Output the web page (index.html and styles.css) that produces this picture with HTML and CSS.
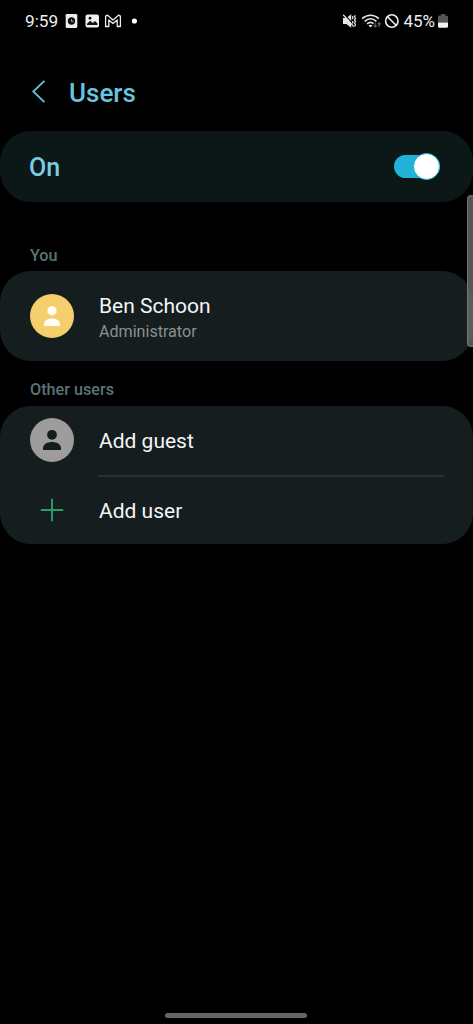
FILE: index.html
```html
<!DOCTYPE html>
<html lang="en">
<head>
<meta charset="utf-8">
<title>Users</title>
<link rel="stylesheet" href="styles.css">
</head>
<body>
<div class="screen">
  <div class="status">
    <div class="status-left">
      <span class="time">9:59</span>
      <svg class="notifications" width="74" height="16" viewBox="0 0 74 16">
        <rect x="0.7" y="1" width="11.6" height="14" rx="1.3" fill="#eee"/>
        <circle cx="6.5" cy="8" r="3.7" fill="#111"/>
        <path d="M6.5 6.2V8.3H8.5" fill="none" stroke="#aaa" stroke-width="1"/>
        <rect x="20.5" y="1.5" width="13.5" height="13" rx="2" fill="#eee"/>
        <path d="M22 12V10.8L25.2 7.8L27.8 10L30 8L32.5 10.4V12Z" fill="#111"/>
        <circle cx="25" cy="5.2" r="1.4" fill="#111"/>
        <path d="M40.6 13.5V3.2L42.5 2.2L48 7.1L53.5 2.2L55.4 3.2V13.5H52.2V7L48 10.6L43.8 7V13.5Z" fill="none" stroke="#eee" stroke-width="1.3" stroke-linejoin="round"/>
        <circle cx="69.4" cy="8" r="2.6" fill="#fff"/>
      </svg>
    </div>
    <div class="status-right">
      <svg class="signals" width="57" height="16" viewBox="0 0 57 16">
        <path d="M1 5H4.4L9.2 1.2V14.8L4.4 11H1Z" fill="#e6e6e6"/>
        <path d="M2.2 1.2L12.6 12.6" stroke="#000" stroke-width="1.2"/>
        <path d="M1.2 1.8L11.8 13.6" stroke="#e6e6e6" stroke-width="1.3"/>
        <path d="M10.7 3V6.2M10.7 8V10.4M13.2 2.2L12.6 3.8L13.4 5.4L12.6 7L13.4 8.6L12.6 10.2L13.4 11.8L12.8 13.6" fill="none" stroke="#ddd" stroke-width="1.3"/>
        <path d="M20.1 5.6C25.2 1.1 31.8 1.1 36.9 5.6M22.7 8.3C26.4 5.1 30.7 5.1 34.4 8.3M25.1 10.9C27.3 9.1 29.8 9.1 31.5 10.7" fill="none" stroke="#e6e6e6" stroke-width="1.6"/>
        <path d="M26.5 12.4Q28.5 11 30.5 12.4L28.5 14.6Z" fill="#e6e6e6"/>
        <path d="M33.2 9.8V14M31.6 12.4L33.2 14L34.8 12.4M37.2 14.2V9.8M35.6 11.4L37.2 9.8L38.8 11.4" fill="none" stroke="#666" stroke-width="1.1"/>
        <circle cx="49.8" cy="8" r="6.2" fill="none" stroke="#eee" stroke-width="1.6"/>
        <path d="M45.5 3.7L54.1 12.3" stroke="#eee" stroke-width="1.6"/>
      </svg>
      <span class="percent">45%</span>
      <svg class="battery" width="10" height="14" viewBox="0 0 10 14">
        <path d="M3 0H7V1.5H8.5Q10 1.5 10 3V8.6H0V3Q0 1.5 1.5 1.5H3Z" fill="#555"/>
        <path d="M0 8.6H10V12.2Q10 13.7 8.5 13.7H1.5Q0 13.7 0 12.2Z" fill="#f2f2f2"/>
      </svg>
    </div>
  </div>

  <header class="header">
    <svg class="back" width="14" height="24" viewBox="0 0 14 24">
      <path d="M12.4 .8L1.2 11.5L12.4 22.2" fill="none" stroke="#69c5df" stroke-width="1.8"/>
    </svg>
    <h1 class="title">Users</h1>
  </header>

  <section class="panel master">
    <span class="master-label">On</span>
    <span class="switch"><span class="thumb"></span></span>
  </section>

  <h2 class="label label-you">You</h2>
  <section class="panel account">
    <svg class="avatar" width="44" height="44" viewBox="0 0 44 44">
      <circle cx="22" cy="22" r="22" fill="#f4cf6b"/>
      <circle cx="22" cy="16.8" r="4.7" fill="#fffef4"/>
      <path d="M14 32V30.4C14 22.6 30 22.6 30 30.4V32Z" fill="#fffef4"/>
    </svg>
    <div class="names">
      <span class="name">Ben Schoon</span>
      <span class="role">Administrator</span>
    </div>
  </section>

  <h2 class="label label-other">Other users</h2>
  <section class="panel others">
    <div class="row row-guest">
      <svg class="avatar" width="44" height="44" viewBox="0 0 44 44">
        <circle cx="22" cy="22" r="22" fill="#9e9c9d"/>
        <circle cx="22" cy="16.8" r="4.9" fill="#141c1d"/>
        <path d="M13 32V30.2C13 22 31 22 31 30.2V32Z" fill="#141c1d"/>
      </svg>
      <span class="name name-guest">Add guest</span>
    </div>
    <div class="divider"></div>
    <div class="row row-add">
      <svg class="avatar" width="44" height="44" viewBox="0 0 44 44">
        <path d="M22 10.8V33.2M10.8 22H33.2" stroke="#2b9d69" stroke-width="1.9"/>
      </svg>
      <span class="name name-user">Add user</span>
    </div>
  </section>

  <div class="home-bar"></div>
  <div class="edge-handle"></div>
</div>
</body>
</html>
```
FILE: styles.css
```css
* { box-sizing: border-box; }
body {
  margin: 0;
  background: #000;
  font-family: Roboto, "Liberation Sans", sans-serif;
  color: #f4f6f6;
}
.screen {
  position: relative;
  display: flex;
  flex-direction: column;
  width: 473px;
  height: 1024px;
  overflow: hidden;
  background: #000;
}
svg { display: block; flex: none; }
.status {
  display: flex;
  justify-content: space-between;
  height: 42px;
  padding: 0 25px;
}
.status-left, .status-right {
  display: flex;
  align-items: center;
  height: 41px;
}
.time, .percent {
  font-size: 17px;
  line-height: 20px;
  color: #eee;
}
.time { font-size: 17.2px; }
.notifications { margin-left: 7px; }
.percent { margin: 0 3px 0 4px; }
.header {
  display: flex;
  align-items: center;
  height: 89px;
  padding: 11px 32px 0;
}
.title {
  margin: 0 0 0 23px;
  padding-top: 2px;
  font-size: 26px;
  font-weight: 500;
  line-height: 32px;
  color: #69c5df;
}
.panel {
  border-radius: 31px;
  background: #151d1e;
}
.master {
  display: flex;
  align-items: center;
  justify-content: space-between;
  height: 71px;
  padding: 0 33px 0 29px;
  background: #0c1717;
}
.master-label {
  padding-top: 2px;
  font-size: 25px;
  font-weight: 500;
  line-height: 30px;
  color: #7acce5;
}
.switch {
  display: flex;
  align-items: center;
  justify-content: flex-end;
  width: 46px;
  height: 23px;
  border-radius: 12px;
  background: #21b2da;
}
.thumb {
  flex: none;
  width: 27px;
  height: 27px;
  border: 1.5px solid #21b2da;
  border-radius: 50%;
  background: #fff;
}
.label {
  display: flex;
  align-items: flex-end;
  margin: 0;
  padding: 0 30px 6px;
  font-size: 16.2px;
  font-weight: 500;
  line-height: 20px;
  color: #587479;
}
.label-you { height: 69px; padding-bottom: 5px; }
.label-other { height: 45px; }
.account {
  display: flex;
  align-items: center;
  height: 90px;
  padding: 0 30px;
}
.names {
  display: flex;
  flex-direction: column;
  padding-top: 4px;
}
.avatar { margin-right: 25px; }
.name {
  font-size: 21px;
  line-height: 26px;
}
.name-guest { padding-top: 2px; }
.name-user { padding-top: 1px; }
.role {
  padding-top: 1px;
  margin-bottom: -1px;
  font-size: 16.1px;
  line-height: 24px;
  color: #8b9090;
}
.others { height: 138px; }
.row {
  display: flex;
  align-items: center;
  padding: 0 30px;
}
.row-guest { height: 69px; padding-bottom: 1px; }
.row-add { height: 67px; padding-bottom: 1px; }
.divider {
  height: 2px;
  margin: 0 29.5px 0 98px;
  background: #2a3233;
}
.home-bar {
  width: 142px;
  height: 5px;
  margin: auto auto 6px 165px;
  border-radius: 3px;
  background: #656565;
}
.edge-handle {
  position: absolute;
  top: 195px;
  right: -2px;
  width: 8px;
  height: 152px;
  border: 1.5px solid rgba(145, 145, 145, 0.5);
  border-radius: 5px;
  background: rgba(115, 115, 115, 0.75);
}
```
